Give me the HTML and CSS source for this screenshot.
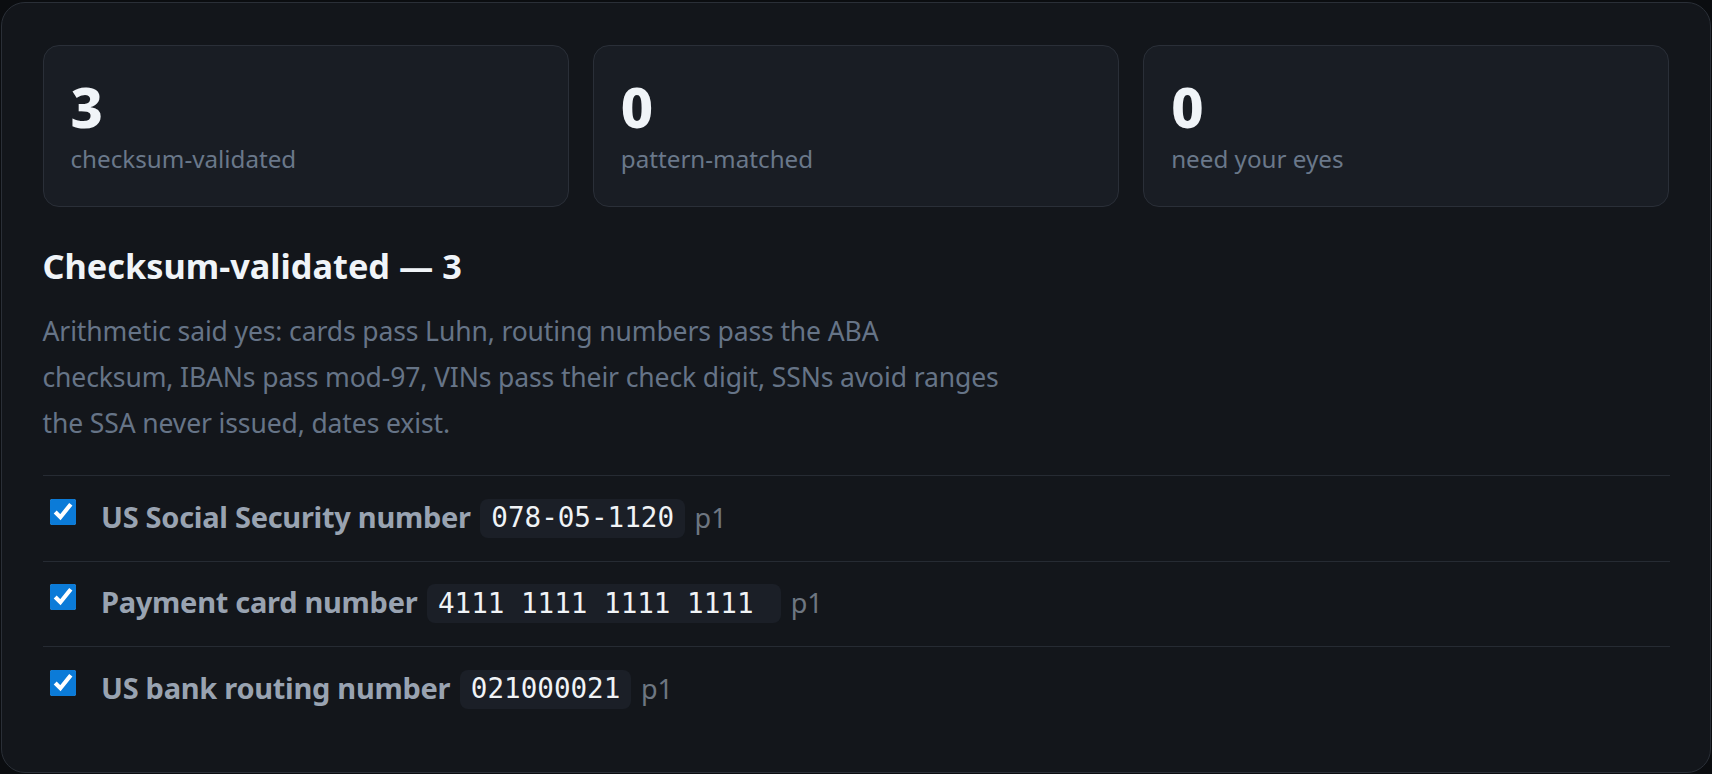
FILE: index.html
```html
<!DOCTYPE html>
<html lang="en">
<head>
<meta charset="utf-8">
<title>Findings</title>
<link rel="stylesheet" href="styles.css">
</head>
<body>
<div class="panel">
  <div class="stats">
    <div class="stat"><div class="stat-num">3</div><div class="stat-label">checksum-validated</div></div>
    <div class="stat"><div class="stat-num">0</div><div class="stat-label">pattern-matched</div></div>
    <div class="stat"><div class="stat-num">0</div><div class="stat-label">need your eyes</div></div>
  </div>
  <h2 class="section-title">Checksum-validated — 3</h2>
  <p class="section-desc">Arithmetic said yes: cards pass Luhn, routing numbers pass the ABA checksum, IBANs pass mod-97, VINs pass their check digit, SSNs avoid ranges the SSA never issued, dates exist.</p>
  <ul class="findings">
    <li class="finding"><input type="checkbox" class="finding-check" checked><div class="finding-body"><span class="finding-label">US Social Security number</span> <code class="finding-value">078-05-1120</code> <span class="finding-page">p1</span></div></li>
    <li class="finding"><input type="checkbox" class="finding-check" checked><div class="finding-body"><span class="finding-label">Payment card number</span> <code class="finding-value">4111 1111 1111 1111 </code> <span class="finding-page">p1</span></div></li>
    <li class="finding"><input type="checkbox" class="finding-check" checked><div class="finding-body"><span class="finding-label">US bank routing number</span> <code class="finding-value">021000021</code> <span class="finding-page">p1</span></div></li>
  </ul>
</div>
</body>
</html>
```

FILE: styles.css
```css
html, body {
  margin: 0;
  background: #0b0d10;
}
body {
  padding: 2px 1px 1px 1px;
  font-family: "Noto Sans", "Open Sans", sans-serif;
}
.panel {
  background: #13161b;
  border: 1px solid #2a2f37;
  border-radius: 24px;
  padding: 41.5px 40.5px 40px;
}
.stats {
  display: grid;
  grid-template-columns: repeat(3, 1fr);
  gap: 24px;
}
.stat {
  background: #191d24;
  border: 1px solid #2a2f38;
  border-radius: 16px;
  padding: 32px 27px 31px;
}
.stat-num {
  font-size: 56px;
  line-height: 56px;
  font-weight: 800;
  color: #f0f4f8;
}
.stat-label {
  margin-top: 9px;
  font-size: 24.2px;
  line-height: 32px;
  color: #6a788a;
}
.section-title {
  margin: 38px 0 0;
  font-size: 34.3px;
  line-height: 42.5px;
  font-weight: 700;
  color: #f0f4f8;
}
.section-desc {
  margin: 21px 0 0;
  max-width: 968px;
  font-size: 26.5px;
  letter-spacing: -0.12px;
  line-height: 46px;
  color: #667487;
}
.findings {
  list-style: none;
  margin: 29px 0 0;
  padding: 0;
}
.finding {
  display: flex;
  align-items: flex-start;
  gap: 25px;
  border-top: 1px solid #262b33;
  padding: 22.5px 0 23px;
}
.finding-check {
  width: 26px;
  height: 26px;
  margin: 0 0 0 7.5px;
  accent-color: #0b7bd8;
  flex: none;
}
.finding-body {
  font-size: 29px;
  line-height: 34px;
  word-spacing: 2px;
}
.finding-label {
  font-weight: 700;
  letter-spacing: -0.28px;
  word-spacing: 0;
  color: #99a3b1;
}
.finding-value {
  display: inline-block;
  white-space: pre;
  font-family: "DejaVu Sans Mono", monospace;
  font-size: 27.6px;
  line-height: 32px;
  padding: 3.5px 11px;
  background: #1b1f27;
  border-radius: 8px;
  word-spacing: 0;
  color: #f0f3f6;
}
.finding-page {
  font-size: 27px;
  color: #6e7681;
}
```
